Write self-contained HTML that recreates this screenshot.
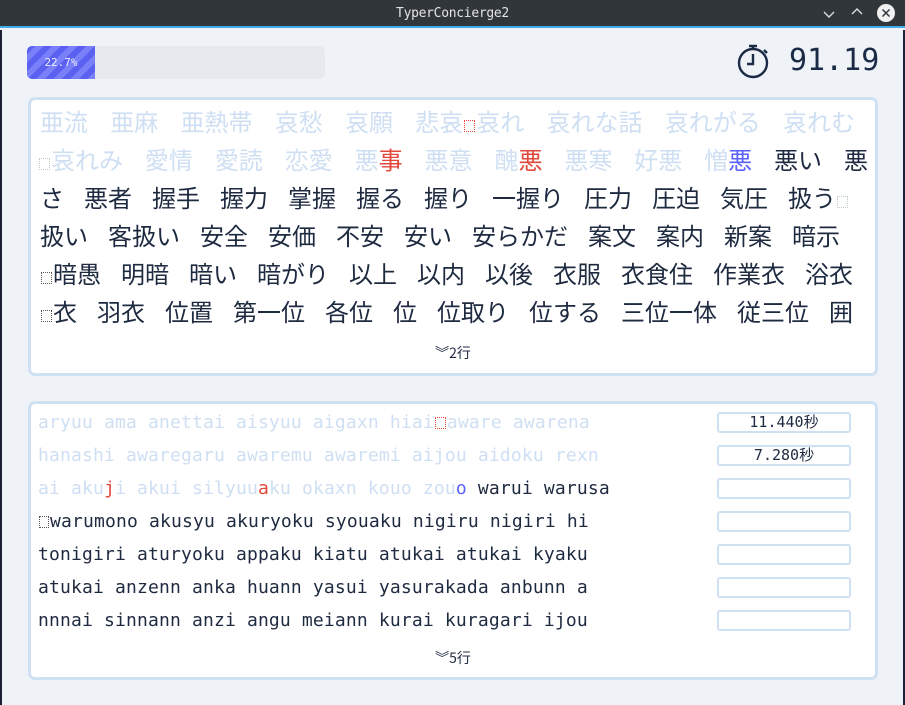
<!DOCTYPE html>
<html><head><meta charset="utf-8"><style>
*{margin:0;padding:0;box-sizing:border-box}
body{width:905px;height:705px;overflow:hidden;background:#eff3f8;font-family:"Liberation Sans","Noto Sans CJK JP",sans-serif;position:relative}
#tb{position:absolute;left:0;top:0;width:905px;height:28px;background:#31363b;border-bottom:2px solid #3daee9}
#tb .t{position:absolute;left:0;right:0;top:6px;text-align:center;color:#e4e4e4;font-size:13px;font-family:"DejaVu Sans Mono",monospace;letter-spacing:-0.3px}
#lb{position:absolute;left:0;top:30px;width:2px;height:675px;background:#1b2035}
#rb{position:absolute;right:0;top:30px;width:2px;height:675px;background:#1b2035}
.pb{position:absolute;left:27px;top:46px;width:298px;height:33px;background:#e6eaee;border-radius:5px;overflow:hidden}
.pf{position:absolute;left:0;top:0;width:68px;height:33px;background:repeating-linear-gradient(135deg,#5a60f0 0 6px,#7a80fa 6px 12px);color:#eef;font-size:11px;font-family:"DejaVu Sans Mono",monospace;text-align:center;line-height:33px}
.tm{position:absolute;left:789px;top:43px;font-family:"DejaVu Sans Mono",monospace;font-size:30px;color:#1b2a45}
.panel{position:absolute;left:28px;width:850px;background:#fff;border:3px solid #cfe0f3;border-radius:7px}
.jp{font-family:"Noto Sans CJK JP",sans-serif;font-size:24px;line-height:38px;white-space:nowrap;padding-left:9px;color:#1e2a40}
.jp span.w{margin-right:20px}
.jp .fx{display:flex;justify-content:space-between}
.jp .fx span.w{margin-right:0}
.L{color:#cfdff3}
.r{color:#e2473b}
.b{color:#5a60fa}
.bx{display:inline-block;width:11px;height:12px;border:1px dotted #555;margin:0 1px;vertical-align:-1px}
.bx.rd{border-color:#e2473b}
.bx.lt{border-color:#bcc}
.ro{font-family:"DejaVu Sans Mono",monospace;font-size:18px;line-height:33px;white-space:nowrap;padding-left:7px;color:#1e2a40;letter-spacing:0.16px}
.more{position:absolute;left:0;right:0;text-align:center;font-size:14px;color:#1e2a40;font-family:"Noto Sans CJK JP",sans-serif}
.tbx{position:absolute;left:686px;width:134px;height:21px;border:2px solid #cfe0f3;border-radius:3px;font-family:"DejaVu Sans Mono","Noto Sans CJK JP",monospace;font-size:15px;text-align:center;line-height:17px;color:#1e2a40}
</style></head><body>
<div id="tb"><div class="t">TyperConcierge2</div>
<svg style="position:absolute;left:822px;top:7px" width="14" height="14"><path d="M2 5 L7 10 L12 5" stroke="#ddd" stroke-width="1.4" fill="none"/></svg>
<svg style="position:absolute;left:850px;top:5px" width="14" height="14"><path d="M2 9 L7 4 L12 9" stroke="#ddd" stroke-width="1.4" fill="none"/></svg>
<svg style="position:absolute;left:876px;top:3px" width="20" height="20"><circle cx="10" cy="10" r="9" fill="#f0f0f0"/><path d="M6.5 6.5L13.5 13.5M13.5 6.5L6.5 13.5" stroke="#31363b" stroke-width="1.5"/></svg>
</div>
<div id="lb"></div><div id="rb"></div>
<div class="pb"><div class="pf">22.7%</div></div>
<svg style="position:absolute;left:735px;top:42px" width="38" height="38"><circle cx="18" cy="21" r="14" stroke="#1b2a45" stroke-width="2.4" fill="none"/><path d="M14 4 H22 M18 4 V7 M29 8 L32 11 M18 12 V22 H12" stroke="#1b2a45" stroke-width="2.4" fill="none"/></svg>
<div class="tm">91.19</div>

<div class="panel" style="top:97px;height:279px">
<div class="jp" style="padding-top:2px">
<div class="L fx" style="width:815px"><span class="w">亜流</span><span class="w">亜麻</span><span class="w">亜熱帯</span><span class="w">哀愁</span><span class="w">哀願</span><span class="w">悲哀<i class="bx rd"></i>哀れ</span><span class="w">哀れな話</span><span class="w">哀れがる</span><span>哀れむ</span></div>
<div class="fx" style="width:830px;margin-left:-2px"><span class="w L"><i class="bx lt"></i>哀れみ</span><span class="w L">愛情</span><span class="w L">愛読</span><span class="w L">恋愛</span><span class="w L">悪<span class="r">事</span></span><span class="w L">悪意</span><span class="w L">醜<span class="r">悪</span></span><span class="w L">悪寒</span><span class="w L">好悪</span><span class="w L">憎<span class="b">悪</span></span><span class="w">悪い</span><span>悪</span></div>
<div><span class="w">さ</span><span class="w">悪者</span><span class="w">握手</span><span class="w">握力</span><span class="w">掌握</span><span class="w">握る</span><span class="w">握り</span><span class="w">一握り</span><span class="w">圧力</span><span class="w">圧迫</span><span class="w">気圧</span><span>扱う<i class="bx lt"></i></span></div>
<div><span class="w">扱い</span><span class="w">客扱い</span><span class="w">安全</span><span class="w">安価</span><span class="w">不安</span><span class="w">安い</span><span class="w">安らかだ</span><span class="w">案文</span><span class="w">案内</span><span class="w">新案</span><span>暗示</span></div>
<div><span class="w"><i class="bx"></i>暗愚</span><span class="w">明暗</span><span class="w">暗い</span><span class="w">暗がり</span><span class="w">以上</span><span class="w">以内</span><span class="w">以後</span><span class="w">衣服</span><span class="w">衣食住</span><span class="w">作業衣</span><span>浴衣</span></div>
<div><span class="w"><i class="bx"></i>衣</span><span class="w">羽衣</span><span class="w">位置</span><span class="w">第一位</span><span class="w">各位</span><span class="w">位</span><span class="w">位取り</span><span class="w">位する</span><span class="w">三位一体</span><span class="w">従三位</span><span>囲</span></div>
</div>
<div class="more" style="top:243px">︾2行</div>
</div>

<div class="panel" style="top:401px;height:279px">
<div class="ro" style="padding-top:2px">
<div class="L">aryuu ama anettai aisyuu aigaxn hiai<i class="bx rd"></i>aware awarena</div>
<div class="L">hanashi awaregaru awaremu awaremi aijou aidoku rexn</div>
<div><span class="L">ai aku</span><span class="r">j</span><span class="L">i akui silyuu</span><span class="r">a</span><span class="L">ku okaxn kouo zou</span><span class="b">o</span> warui warusa</div>
<div><i class="bx" style="width:10px"></i>warumono akusyu akuryoku syouaku nigiru nigiri hi</div>
<div>tonigiri aturyoku appaku kiatu atukai atukai kyaku</div>
<div>atukai anzenn anka huann yasui yasurakada anbunn a</div>
<div>nnnai sinnann anzi angu meiann kurai kuragari ijou</div>
</div>
<div class="tbx" style="top:8px">11.440秒</div>
<div class="tbx" style="top:41px">7.280秒</div>
<div class="tbx" style="top:74px"></div>
<div class="tbx" style="top:107px"></div>
<div class="tbx" style="top:140px"></div>
<div class="tbx" style="top:173px"></div>
<div class="tbx" style="top:206px"></div>
<div class="more" style="top:244px">︾5行</div>
</div>
</body></html>
